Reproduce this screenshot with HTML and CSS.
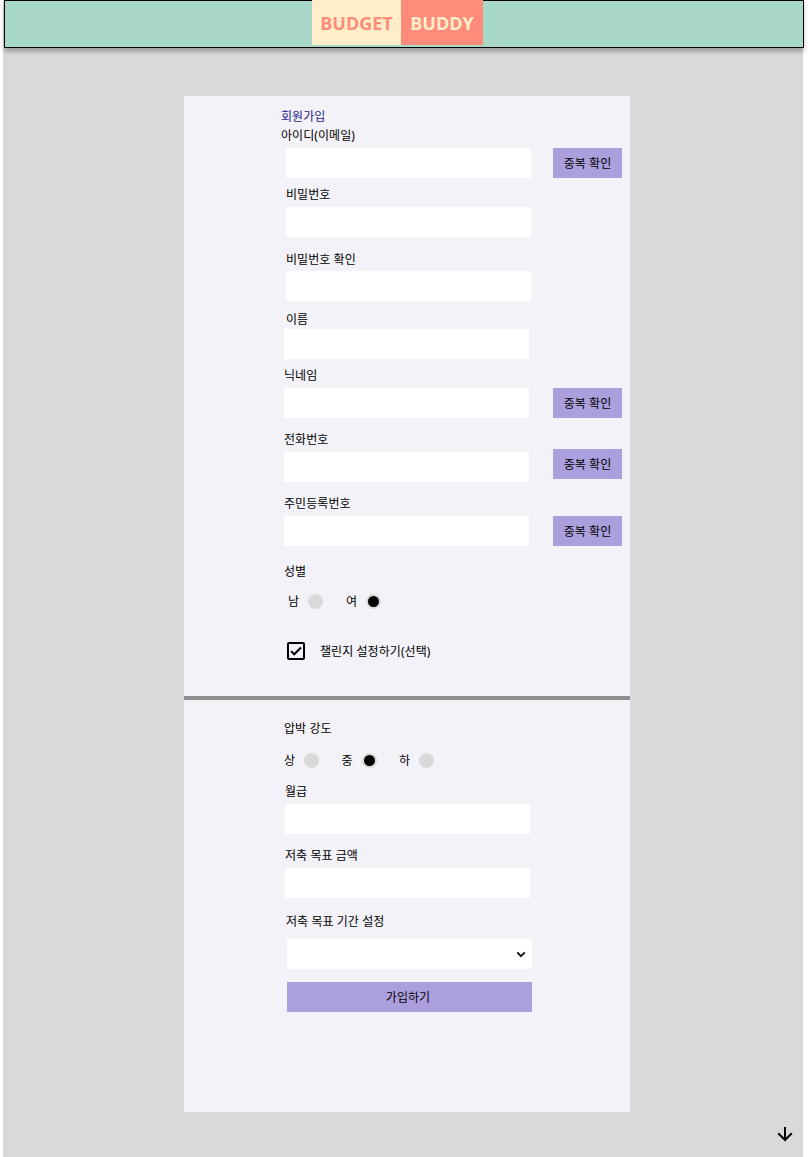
FILE: index.html
```html
<!DOCTYPE html>
<html lang="ko">
<head>
<meta charset="utf-8">
<title>BUDGET BUDDY - 회원가입</title>
<link rel="stylesheet" href="styles.css">
</head>
<body>
<div class="page">
  <header class="header">
    <div class="logo"><span class="logo-left">BUDGET</span><span class="logo-right">BUDDY</span></div>
  </header>
  <main class="card">
    <form class="form">
      <h1 class="title">회원가입</h1>
      <div class="field field-id">
        <label class="label" for="uid">아이디(이메일)</label>
        <div class="row"><input class="input" id="uid"><button class="btn" type="button">중복 확인</button></div>
      </div>
      <div class="field field-pw">
        <label class="label" for="pw">비밀번호</label>
        <input class="input" id="pw" type="password">
      </div>
      <div class="field field-pw2">
        <label class="label" for="pw2">비밀번호 확인</label>
        <input class="input" id="pw2" type="password">
      </div>
      <div class="field field-name">
        <label class="label" for="name">이름</label>
        <input class="input" id="name">
      </div>
      <div class="field field-nick">
        <label class="label" for="nick">닉네임</label>
        <div class="row"><input class="input" id="nick"><button class="btn" type="button">중복 확인</button></div>
      </div>
      <div class="field field-phone">
        <label class="label" for="phone">전화번호</label>
        <div class="row"><input class="input" id="phone"><button class="btn" type="button">중복 확인</button></div>
      </div>
      <div class="field field-ssn">
        <label class="label" for="ssn">주민등록번호</label>
        <div class="row"><input class="input" id="ssn"><button class="btn" type="button">중복 확인</button></div>
      </div>
      <div class="label gender">성별</div>
      <div class="radios radios-gender">
        <span class="option"><span class="option-text">남</span><i class="radio"></i></span>
        <span class="option"><span class="option-text">여</span><i class="radio checked"></i></span>
      </div>
      <div class="challenge">
        <svg class="checkbox" viewBox="0 0 18 18"><rect x="1" y="1" width="16" height="16" rx="1" fill="none" stroke="#000" stroke-width="2"/><path d="M4 9.1 7.2 12.3 14 5.5" fill="none" stroke="#000" stroke-width="2"/></svg>
        <span class="challenge-text">챌린지 설정하기(선택)</span>
      </div>
      <hr class="divider">
      <div class="label pressure">압박 강도</div>
      <div class="radios radios-pressure">
        <span class="option"><span class="option-text">상</span><i class="radio"></i></span>
        <span class="option"><span class="option-text">중</span><i class="radio checked"></i></span>
        <span class="option"><span class="option-text">하</span><i class="radio"></i></span>
      </div>
      <div class="field field-pay">
        <label class="label" for="pay">월급</label>
        <input class="input" id="pay">
      </div>
      <div class="field field-goal">
        <label class="label" for="goal">저축 목표 금액</label>
        <input class="input" id="goal">
      </div>
      <div class="field field-term">
        <div class="label">저축 목표 기간 설정</div>
        <div class="select"><svg class="chevron" viewBox="0 0 10 7"><path d="M1.2 1.3 5 5.1 8.8 1.3" fill="none" stroke="#111" stroke-width="1.9"/></svg></div>
      </div>
      <button class="btn submit" type="button">가입하기</button>
    </form>
  </main>
  <svg class="down" viewBox="0 0 16 16"><path d="M8 1V14M1.2 7.2 8 14 14.8 7.2" fill="none" stroke="#000" stroke-width="2"/></svg>
</div>
</body>
</html>
```
FILE: styles.css
```css
* { box-sizing: border-box; }
body {
  margin: 0;
  background: #fff;
  color: #000;
  font: 12px/18px "Noto Sans", "Noto Sans CJK KR", sans-serif;
  letter-spacing: .06px;
}
.page {
  position: relative;
  width: 800px;
  height: 1157px;
  margin-left: 3px;
  background: #d9d9d9;
}
.header {
  width: 800px;
  height: 48px;
  margin-left: 1px;
  padding-left: 307px;
  background: #a8d8c8;
  border: 1px solid #000;
  box-shadow: 0 4px 4px rgba(0, 0, 0, .25);
}
.logo {
  display: flex;
  width: 171px;
  height: 45px;
  margin-top: -1px;
  font: 700 18px/46px "Open Sans", sans-serif;
  letter-spacing: 0;
}
.logo-left, .logo-right { height: 45px; text-align: center; }
.logo-left { width: 89px; background: #ffeeca; color: #ff8c7a; }
.logo-right { width: 82px; background: #ff8c7a; color: #ffeeca; }
.card {
  width: 446px;
  height: 1016px;
  margin: 48px 0 0 181px;
  padding-top: 12px;
  background: #f3f2f8;
}
.form { display: flex; flex-direction: column; }
.title {
  height: 16px;
  margin: 0 0 0 97px;
  color: #1d1b8f;
  font-size: 12px;
  font-weight: 400;
  line-height: 18px;
}
.label { display: block; height: 16px; }
.field .label { margin-bottom: 5px; }
.row { display: flex; align-items: flex-start; }
.input {
  display: block;
  width: 245px;
  height: 30px;
  padding: 0 8px;
  border: 0;
  background: #fff;
  font: inherit;
}
.btn {
  width: 69px;
  height: 30px;
  margin-left: 24px;
  padding: 2px 0 0;
  border: 0;
  background: #ac9fde;
  color: #000;
  font: inherit;
  letter-spacing: inherit;
}
.field-id { margin: 3px 0 0 102px; }
.field-id .label { margin-left: -5px; }
.field-id .btn { margin-left: 22px; }
.field-pw { margin: 8px 0 0 102px; }
.field-pw2 { margin: 14px 0 0 102px; }
.field-pw2 .label { margin-bottom: 4px; }
.field-name { margin: 10px 0 0 100px; }
.field-name .label { margin: 0 0 2px 2px; }
.field-nick { margin: 8px 0 0 100px; }
.field-phone, .field-ssn { margin: 13px 0 0 100px; }
.field-phone .btn { margin-top: -3px; }
.field-phone .row { height: 30px; }
.gender { margin: 17px 0 0 100px; }
.radios { display: flex; height: 16px; }
.radios-gender { gap: 23px; margin: 14px 0 0 104px; }
.radios-pressure { gap: 22.5px; margin: 16px 0 0 100px; }
.option { display: flex; align-items: center; gap: 9px; }
.option-text { width: 11px; padding-top: 2px; }
.radio {
  width: 15px;
  height: 15px;
  border-radius: 50%;
  background: #d9d9d9;
}
.radio.checked { background: #000; border: 2px solid #d9d9d9; }
.challenge {
  display: flex;
  align-items: center;
  gap: 15px;
  height: 18px;
  margin: 33px 0 0 103px;
}
.challenge-text { padding-top: 2px; }
.checkbox { width: 18px; height: 18px; }
.divider { width: 446px; height: 4px; margin: 36px 0 0; border: 0; background: #8f8f8f; }
.pressure { margin: 20px 0 0 100px; }
.field-pay { margin: 15px 0 0 101px; }
.field-goal { margin: 13px 0 0 101px; }
.field-term { margin: 15px 0 0 103px; }
.field-term .label { margin: 0 0 10px -1px; }
.select {
  display: flex;
  align-items: center;
  justify-content: flex-end;
  width: 245px;
  height: 30px;
  padding-right: 6.5px;
  background: #fff;
}
.chevron { width: 10px; height: 7px; }
.submit { width: 245px; margin: 13px 0 0 103px; padding-right: 3px; }
.down {
  position: absolute;
  right: 10px;
  bottom: 15px;
  width: 16px;
  height: 16px;
}
```
